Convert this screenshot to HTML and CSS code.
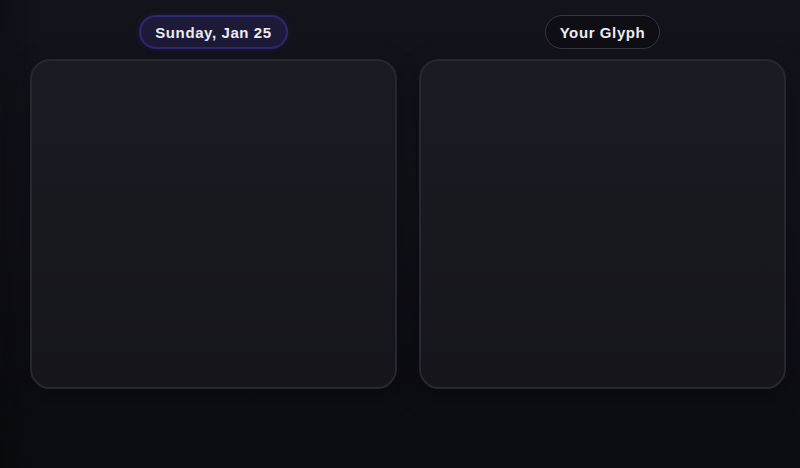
FILE: index.html
```html
<!DOCTYPE html>
<html lang="en">
<head>
<meta charset="utf-8">
<link rel="stylesheet" href="styles.css">
</head>
<body>
<main class="board">
  <section class="col">
    <div class="pill pill-date">Sunday, Jan 25</div>
    <div class="card"></div>
  </section>
  <section class="col">
    <div class="pill pill-glyph">Your Glyph</div>
    <div class="card"></div>
  </section>
</main>
</body>
</html>
```

FILE: styles.css
```css
html, body {
  margin: 0;
  height: 100%;
}
body {
  background: linear-gradient(180deg, #13131c 0%, #111119 45%, #0b0c11 100%);
  font-family: "Liberation Sans", Arial, sans-serif;
  overflow: hidden;
  position: relative;
}
body::before {
  content: "";
  position: absolute;
  inset: 0;
  background: linear-gradient(90deg, rgba(0,0,0,0.25) 0px, rgba(0,0,0,0) 40px);
  pointer-events: none;
}
.board {
  position: relative;
  display: grid;
  grid-template-columns: 367px 367px;
  column-gap: 22px;
  padding: 15px 0 0 30px;
}
.col {
  display: flex;
  flex-direction: column;
  align-items: center;
  gap: 10px;
}
.pill {
  height: 34px;
  box-sizing: border-box;
  padding: 0 14px;
  border-radius: 17px;
  display: flex;
  align-items: center;
  font-size: 15px;
  font-weight: 700;
  letter-spacing: 0.6px;
  color: #ecebf3;
}
.pill-date {
  background: #1d1a38;
  border: 2px solid #2e2870;
  box-shadow: 0 0 6px rgba(60, 45, 140, 0.25);
}
.pill-glyph {
  background: #0e0e14;
  border: 1.5px solid #363641;
}
.card {
  width: 367px;
  height: 330px;
  box-sizing: border-box;
  border-radius: 20px;
  border: 2px solid #27272f;
  background: linear-gradient(180deg, #1b1b23 0%, #18181f 50%, #15151b 100%);
  box-shadow: 0 8px 24px rgba(0,0,0,0.35);
}
```
